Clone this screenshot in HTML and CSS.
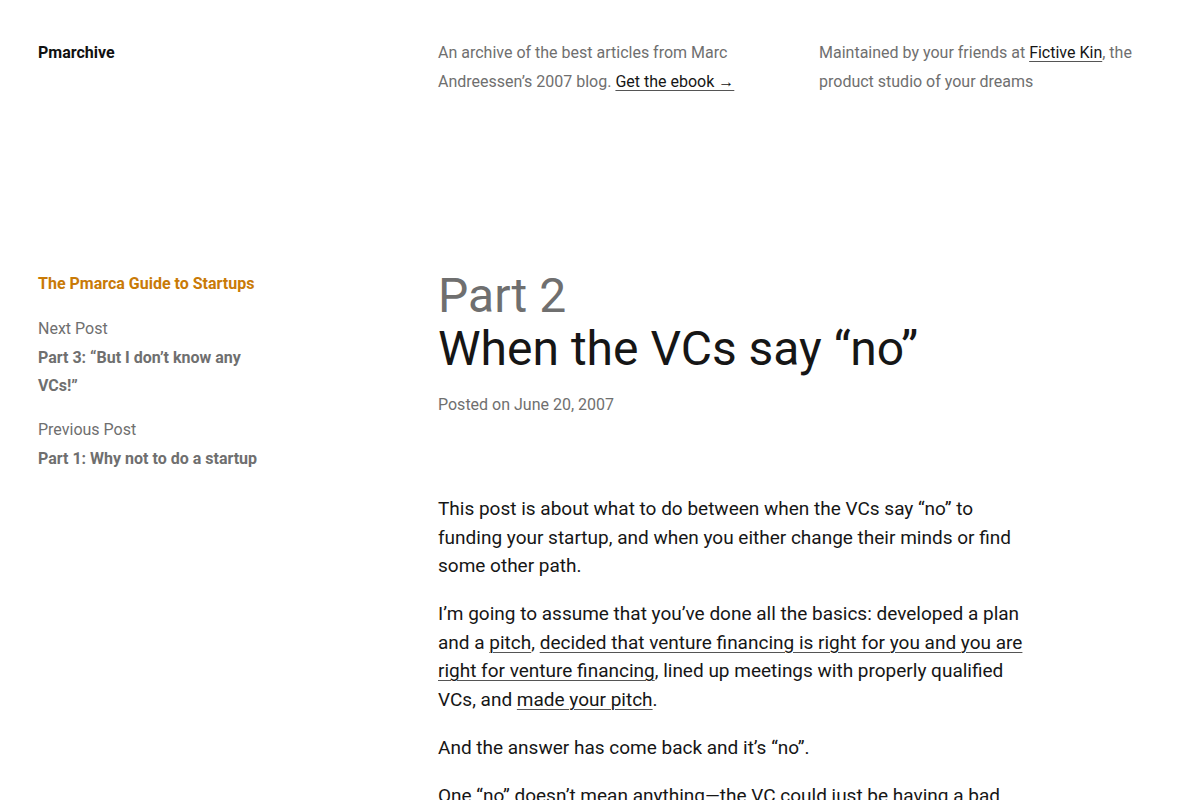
FILE: index.html
```html
<!DOCTYPE html>
<html lang="en">
<head>
  <meta charset="UTF-8" />
  <meta name="viewport" content="width=device-width, initial-scale=1.0" />
  <title>When the VCs say “no” – Pmarchive</title>
  <link rel="stylesheet" href="styles.css">
</head>
<body>
  <header class="site-header">
    <a class="logo" href="#">Pmarchive</a>
    <p class="blurb">An archive of the best articles from Marc Andreessen’s 2007 blog. <a href="#">Get the ebook →</a></p>
    <p class="blurb">Maintained by your friends at <a href="#">Fictive Kin</a>, the product studio of your dreams</p>
  </header>

  <main class="layout">
    <aside class="sidebar">
      <a class="series" href="#">The Pmarca Guide to Startups</a>
      <div class="nav-item">
        <span class="nav-label">Next Post</span>
        <a class="nav-link" href="#">Part 3: “But I don’t know any VCs!”</a>
      </div>
      <div class="nav-item">
        <span class="nav-label">Previous Post</span>
        <a class="nav-link" href="#">Part 1: Why not to do a startup</a>
      </div>
    </aside>

    <article class="post">
      <h1 class="post-title">
        <span class="part">Part 2</span>
        When the VCs say “no”
      </h1>
      <p class="meta">Posted on June 20, 2007</p>

      <div class="post-body">
        <p>This post is about what to do between when the VCs say “no” to funding your startup, and when you either change their minds or find some other path.</p>
        <p>I’m going to assume that you’ve done all the basics: developed a plan and a <a href="#">pitch</a>, <a href="#">decided that venture financing is right for you and you are right for venture financing</a>, lined up meetings with properly qualified VCs, and <a href="#">made your pitch</a>.</p>
        <p>And the answer has come back and it’s “no”.</p>
        <p>One “no” doesn’t mean anything—the VC could just be having a bad day, or might not be the right fit for your kind of company.</p>
      </div>
    </article>
  </main>
</body>
</html>
```

FILE: styles.css
```css
body {
  margin: 0;
  padding: 38px 38px 0;
  font-family: Roboto, "Open Sans", sans-serif;
  color: #161616;
  background: #fff;
}
a {
  color: #161616;
  text-decoration: underline;
  text-decoration-thickness: 1px;
  text-underline-offset: 3px;
  text-decoration-color: #555;
}
p {
  margin: 0;
}

.site-header {
  display: grid;
  grid-template-columns: 362px 343px 343px;
  column-gap: 38px;
  font-size: 16px;
  line-height: 29px;
}
.logo {
  font-weight: 700;
  text-decoration: none;
  color: #111;
}
.blurb {
  color: #6f6f6f;
}

.layout {
  display: grid;
  grid-template-columns: 362px 590px;
  column-gap: 38px;
  margin-top: 173px;
}

.sidebar {
  width: 240px;
  padding-top: 1px;
  font-size: 16px;
  line-height: 28.5px;
}
.series {
  display: block;
  color: #c97a06;
  font-weight: 700;
  text-decoration: none;
  margin-bottom: 16.5px;
}
.nav-item {
  margin-bottom: 15.5px;
}
.nav-label {
  display: block;
  color: #6f6f6f;
}
.nav-link {
  display: block;
  color: #6f6f6f;
  font-weight: 700;
  text-decoration: none;
}

.post-title {
  margin: 0;
  font-size: 48px;
  line-height: 53px;
  font-weight: 400;
}
.part {
  display: block;
  color: #6f6f6f;
}
.meta {
  margin-top: 15px;
  font-size: 16px;
  line-height: 29px;
  color: #6f6f6f;
}

.post-body {
  margin-top: 76px;
  font-size: 19px;
  line-height: 28.5px;
}
.post-body p {
  margin-bottom: 19.5px;
}
```
